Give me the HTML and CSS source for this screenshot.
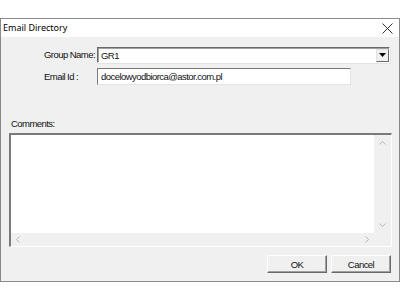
FILE: index.html
```html
<!DOCTYPE html>
<html>
<head>
<meta charset="utf-8">
<link rel="stylesheet" href="styles.css">
</head>
<body>
<div class="window">
  <div class="titlebar">
    <span class="title">Email Directory</span>
    <svg class="close" width="11" height="11" viewBox="0 0 11 11"><path d="M0.5 0.5L10.5 10.5M10.5 0.5L0.5 10.5" stroke="#333" stroke-width="1" fill="none"/></svg>
  </div>
  <div class="body">
    <div class="form">
      <label class="lbl">Group Name:</label>
      <div class="combo">
        <span class="combo-text">GR1</span>
        <span class="combo-btn"><svg width="7" height="4" viewBox="0 0 7 4"><path d="M0 0H7L3.5 4Z" fill="#000"/></svg></span>
      </div>
      <label class="lbl">Email Id :</label>
      <div class="edit">docelowyodbiorca@astor.com.pl</div>
    </div>
    <div class="comments-lbl">Comments:</div>
    <div class="memo">
      <div class="memo-main">
        <div class="memo-text"></div>
        <div class="vscroll">
          <svg width="7" height="4" viewBox="0 0 7 4"><path d="M0.5 3.5L3.5 0.5L6.5 3.5" stroke="#b4b4b4" fill="none"/></svg>
          <svg width="7" height="4" viewBox="0 0 7 4"><path d="M0.5 0.5L3.5 3.5L6.5 0.5" stroke="#b4b4b4" fill="none"/></svg>
        </div>
      </div>
      <div class="hscroll">
        <svg width="4" height="7" viewBox="0 0 4 7"><path d="M3.5 0.5L0.5 3.5L3.5 6.5" stroke="#b4b4b4" fill="none"/></svg>
        <svg class="right" width="4" height="7" viewBox="0 0 4 7"><path d="M0.5 0.5L3.5 3.5L0.5 6.5" stroke="#b4b4b4" fill="none"/></svg>
        <span class="corner"></span>
      </div>
    </div>
    <div class="buttons">
      <div class="btn">OK</div>
      <div class="btn">Cancel</div>
    </div>
  </div>
</div>
</body>
</html>
```
FILE: styles.css
```css
html, body {
  margin: 0;
  padding: 0;
  background: #ffffff;
}
body {
  width: 400px;
  height: 300px;
  overflow: hidden;
  font-family: "Liberation Sans", Arial, sans-serif;
  font-size: 9.5px;
  letter-spacing: -0.55px;
  color: #111;
}
.window {
  margin-top: 18px;
  width: 400px;
  height: 264px;
  box-sizing: border-box;
  border: 1px solid #8a8a8a;
  display: flex;
  flex-direction: column;
}
.titlebar {
  height: 18px;
  background: #fff;
  display: flex;
  align-items: center;
  justify-content: space-between;
  padding: 0 6px 0 2px;
}
.title {
  font-family: "Noto Sans", "Open Sans", sans-serif;
  font-size: 9px;
  letter-spacing: 0;
  color: #000;
  line-height: 18px;
}
.close {
  display: block;
}
.body {
  flex: 1;
  background: #f0f0f0;
  padding: 10px 7px 0 8px;
  display: flex;
  flex-direction: column;
}
.form {
  display: grid;
  grid-template-columns: 53px 1fr;
  row-gap: 5px;
  padding-left: 35px;
  align-items: center;
}
.lbl {
  line-height: 16px;
  white-space: nowrap;
}
.combo {
  height: 16px;
  box-sizing: border-box;
  width: 293px;
  background: #fff;
  border-top: 1px solid #696969;
  border-left: 1px solid #696969;
  border-right: 1px solid #fff;
  border-bottom: 1px solid #fff;
  box-shadow: inset 1px 1px 0 #a0a0a0, 1px 1px 0 #e3e3e3;
  display: flex;
  align-items: center;
  justify-content: space-between;
}
.combo-text {
  padding-left: 3px;
}
.combo-btn {
  width: 13px;
  height: 13px;
  box-sizing: border-box;
  background: #f0f0f0;
  border-top: 1px solid #e3e3e3;
  border-left: 1px solid #e3e3e3;
  border-right: 1px solid #696969;
  border-bottom: 1px solid #696969;
  display: flex;
  align-items: center;
  justify-content: center;
}
.combo-btn svg { display: block; }
.edit {
  width: 254px;
  height: 17px;
  box-sizing: border-box;
  background: #fff;
  border-top: 1px solid #7a7a7a;
  border-left: 1px solid #7a7a7a;
  border-right: 1px solid #e3e3e3;
  border-bottom: 1px solid #e3e3e3;
  padding-left: 3px;
  line-height: 15px;
}
.comments-lbl {
  margin-top: 33px;
  margin-left: 2px;
  line-height: 12px;
}
.memo {
  margin-top: 3px;
  width: 383px;
  height: 114px;
  box-sizing: border-box;
  border-top: 2px solid #7a7a7a;
  border-left: 2px solid #7a7a7a;
  border-right: 1px solid #fff;
  border-bottom: 1px solid #fff;
  display: flex;
  flex-direction: column;
}
.memo-main {
  flex: 1;
  display: flex;
}
.memo-text {
  flex: 1;
  background: #fff;
}
.vscroll {
  width: 17px;
  background: #f0f0f0;
  display: flex;
  flex-direction: column;
  justify-content: space-between;
  align-items: center;
  padding: 6px 0 6px;
}
.hscroll {
  height: 13px;
  background: #f0f0f0;
  display: flex;
  align-items: center;
  padding-left: 5px;
}
.hscroll .right {
  margin-left: auto;
  margin-right: 5px;
}
.corner {
  width: 17px;
}
.buttons {
  margin-top: 8px;
  display: flex;
  justify-content: flex-end;
  gap: 4px;
  padding-right: 1px;
}
.btn {
  width: 60px;
  height: 18px;
  box-sizing: border-box;
  background: #f0f0f0;
  border-top: 1px solid #fff;
  border-left: 1px solid #fff;
  border-right: 1px solid #696969;
  border-bottom: 1px solid #696969;
  box-shadow: inset -1px -1px 0 #a0a0a0;
  display: flex;
  align-items: center;
  justify-content: center;
}
```
